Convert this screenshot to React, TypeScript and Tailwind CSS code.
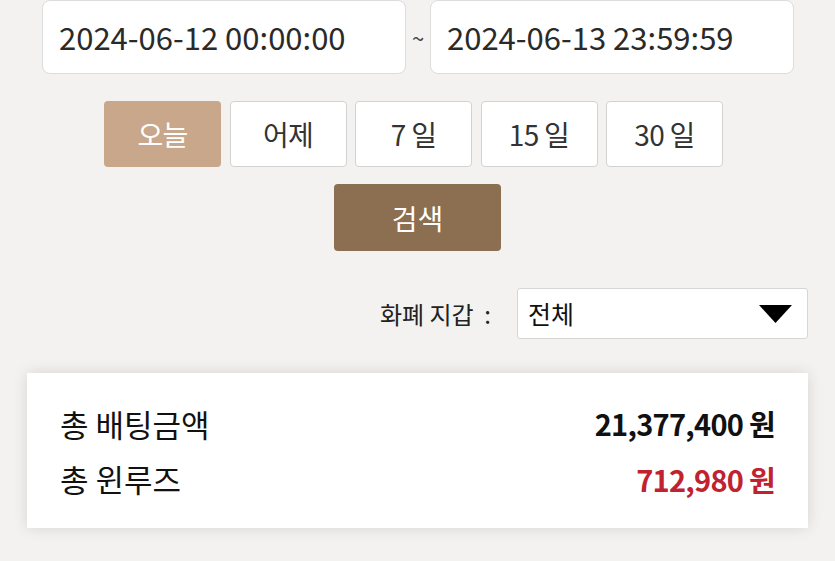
const periods = ["오늘", "어제", "7 일", "15 일", "30 일"];

export default function App() {
  const font = { fontFamily: '"Noto Sans CJK KR", "Noto Sans", sans-serif' };

  return (
    <main
      className="min-h-screen w-full bg-[#f3f2f0] text-[#222]"
      style={font}
    >
      {/* date range */}
      <div className="flex items-center pl-[42px]">
        <div className="flex h-[74px] w-[364px] items-center rounded-lg border border-[#dcdcdc] bg-white pl-[16px] text-[31px] text-[#2a2a2a]">
          2024-06-12 00:00:00
        </div>
        <span className="w-[24px] text-center text-[22px] text-[#444]">~</span>
        <div className="flex h-[74px] w-[364px] items-center rounded-lg border border-[#dcdcdc] bg-white pl-[16px] text-[31px] text-[#2a2a2a]">
          2024-06-13 23:59:59
        </div>
      </div>

      {/* quick periods */}
      <div className="mt-[27px] flex gap-[8.5px] pl-[104px]">
        {periods.map((p, i) => (
          <button
            key={p}
            className={`flex h-[66px] w-[117px] items-center justify-center rounded-[4px] text-[28px] tracking-tight ${
              i === 0
                ? "bg-[#c8a78a] text-white"
                : "border border-[#d2d2d2] bg-white text-[#333]"
            }`}
          >
            {p}
          </button>
        ))}
      </div>

      {/* search */}
      <div className="mt-[17px] flex justify-center">
        <button className="flex h-[67px] w-[167px] items-center justify-center rounded-[4px] bg-[#8c6e51] text-[28px] text-white">
          검색
        </button>
      </div>

      {/* currency wallet */}
      <div className="mt-[37px] flex items-center justify-end pr-[27px]">
        <span className="mr-[26px] text-[24px] text-[#222]">화폐 지갑&nbsp;&nbsp;:</span>
        <div className="flex h-[51px] w-[291px] items-center justify-between rounded-[3px] border border-[#d6d6d6] bg-white pl-[10px] pr-[15px]">
          <span className="text-[25px] text-[#111]">전체</span>
          <svg width="33" height="18" viewBox="0 0 33 18">
            <polygon points="0,0 33,0 16.5,18" fill="#000" />
          </svg>
        </div>
      </div>

      {/* totals */}
      <div className="mx-[27px] mt-[34px] flex h-[155px] flex-col justify-center gap-[9px] bg-white px-[33px] pt-[2px] shadow-[0_0_14px_rgba(0,0,0,0.12)]">
        <div className="flex items-center justify-between">
          <span className="text-[31px] text-[#111]">총 배팅금액</span>
          <span className="text-[29px] font-bold tracking-tight text-[#111]">21,377,400 원</span>
        </div>
        <div className="flex items-center justify-between">
          <span className="text-[31px] text-[#111]">총 윈루즈</span>
          <span className="text-[29px] font-bold tracking-tight text-[#c0222f]">712,980 원</span>
        </div>
      </div>
    </main>
  );
}
